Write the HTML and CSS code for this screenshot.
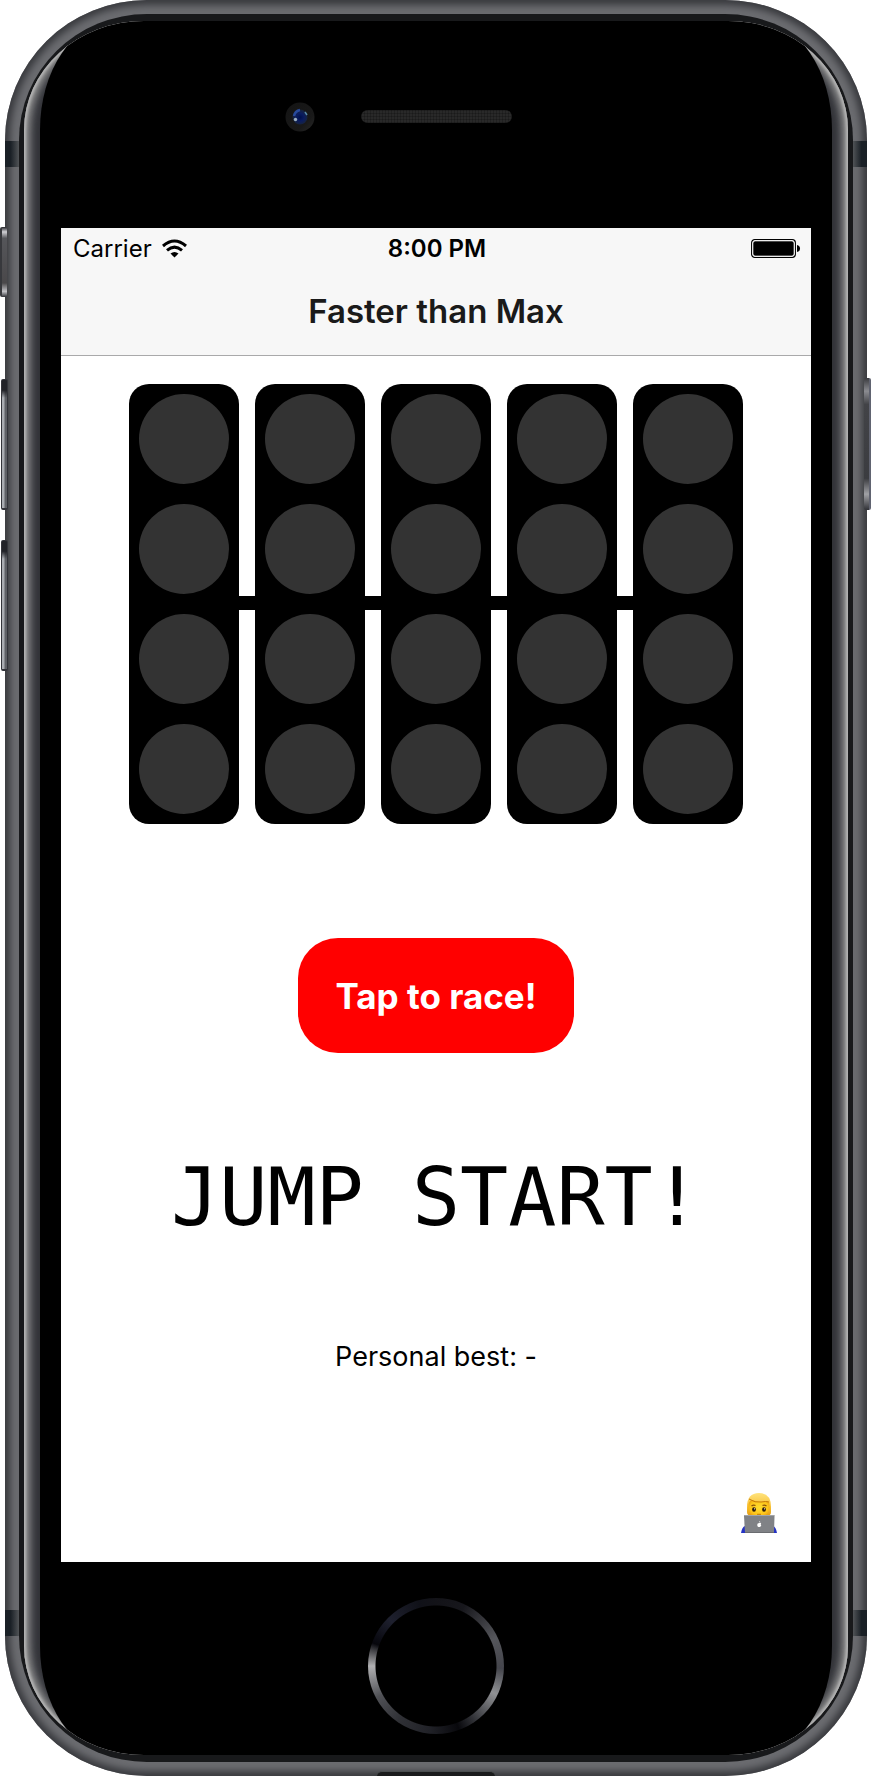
FILE: index.html
```html
<!DOCTYPE html>
<html lang="en">
<head>
<meta charset="utf-8">
<meta name="viewport" content="width=device-width, initial-scale=1">
<title>Faster than Max</title>
<link rel="stylesheet" href="styles.css">
</head>
<body>
<div class="phone">
  <span class="side-key side-key--mute"></span>
  <span class="side-key side-key--volume side-key--up"></span>
  <span class="side-key side-key--volume side-key--down"></span>
  <span class="side-key side-key--power"></span>
  <div class="chassis">
    <span class="band band--top band--left"></span>
    <span class="band band--top band--right"></span>
    <span class="band band--bottom band--left"></span>
    <span class="band band--bottom band--right"></span>
    <span class="port"></span>
    <div class="rim">
      <div class="glass">
        <div class="face">
          <div class="bezel-top">
            <svg class="camera" viewBox="0 0 30 30" aria-hidden="true">
              <defs>
                <radialGradient id="lens" cx=".52" cy=".52" r=".5">
                  <stop offset="0" stop-color="#00104a"/>
                  <stop offset=".5" stop-color="#0a1c60"/>
                  <stop offset="1" stop-color="#17233c"/>
                </radialGradient>
                <linearGradient id="barrel" x1="0" y1="0" x2="1" y2="1">
                  <stop offset="0" stop-color="#141414"/>
                  <stop offset=".7" stop-color="#191919"/>
                  <stop offset="1" stop-color="#292929"/>
                </linearGradient>
              </defs>
              <circle cx="15" cy="15" r="14.5" fill="url(#barrel)"/>
              <circle cx="15" cy="15" r="7.5" fill="url(#lens)"/>
              <path d="M9 14q1-5 6-6" stroke="#315bc0" stroke-width="2.5" fill="none" opacity=".7"/>
              <path d="M20 10l2 3" stroke="#69a5c8" stroke-width="1.5" opacity=".8"/>
              <circle cx="10.500" cy="17.500" r="1.700" fill="#a9bccb" opacity=".9"/>
            </svg>
            <span class="speaker"></span>
          </div>

          <div class="screen">
            <header class="top">
              <div class="status">
                <div class="status-left">
                  <span>Carrier</span>
                  <svg class="wifi" viewBox="0 0 25 19" role="img" aria-label="Wi-Fi">
                    <g fill="none" stroke="#000" stroke-width="3">
                      <path d="M1 7Q12.500-3 24 7"/>
                      <path d="M5 11.300Q12.500 4.900 20 11.300"/>
                    </g>
                    <path d="M8.500 14.600Q12.500 11.300 16.500 14.600L12.500 18.500Z"/>
                  </svg>
                </div>
                <time class="clock">8:00 PM</time>
                <svg class="battery" viewBox="0 0 50 19" role="img" aria-label="Battery full">
                  <rect x=".7" y=".7" width="43.600" height="17.600" rx="3" fill="#fff" stroke="#000" stroke-width="1.300"/>
                  <rect x="2" y="2" width="41" height="15" rx="2"/>
                  <rect x="1.800" y="1.800" width="41.400" height="15.400" rx="2.200" fill="none" stroke="#fff" stroke-width="1"/>
                  <path d="M46 6q3 .5 3 3.500t-3 3.500z"/>
                </svg>
              </div>
              <h1 class="title">Faster than Max</h1>
            </header>

            <main class="game">
              <div class="lights" role="img" aria-label="Start lights, all off">
                <div class="panel"><i></i><i></i><i></i><i></i></div>
                <div class="panel"><i></i><i></i><i></i><i></i></div>
                <div class="panel"><i></i><i></i><i></i><i></i></div>
                <div class="panel"><i></i><i></i><i></i><i></i></div>
                <div class="panel"><i></i><i></i><i></i><i></i></div>
              </div>
              <button class="race" type="button">Tap to race!</button>
              <p class="result">JUMP START!</p>
              <p class="best">Personal best: -</p>
              <button class="about" type="button" aria-label="About the developer">
                <svg viewBox="0 0 36 40" aria-hidden="true">
                  <defs>
                    <radialGradient id="skin" cx=".5" cy=".45" r=".6">
                      <stop offset="0" stop-color="#ffdc2e"/>
                      <stop offset=".7" stop-color="#fdc51b"/>
                      <stop offset="1" stop-color="#e89d10"/>
                    </radialGradient>
                    <linearGradient id="hair" x1="0" y1="0" x2="0" y2="1">
                      <stop offset="0" stop-color="#ffe37d"/>
                      <stop offset=".6" stop-color="#f8c033"/>
                      <stop offset="1" stop-color="#e39c14"/>
                    </linearGradient>
                  </defs>
                  <path d="M0 40q1-6 4-7h28q3 1 4 7z" fill="#2432c4"/>
                  <path d="M6 14Q6 0 18 0t12 14v5q0 3-3 4H9q-3-1-3-4z" fill="url(#hair)"/>
                  <path d="M7.500 13q0-5 3.500-6 8 3 16 1 1.500 2 1.500 7-1 9-10.500 9T7.500 17z" fill="url(#skin)"/>
                  <path d="M8 6q6 4 12 3 5-1 8 0" stroke="#c57b0b" stroke-width="1" fill="none"/>
                  <path d="M10.500 13q2-1.500 4-.5M21.500 12.500q2-1 4 .5" stroke="#8b5208" stroke-width="1.200" fill="none"/>
                  <ellipse cx="13" cy="16.500" rx="1.900" ry="2.200" fill="#2d1a08"/>
                  <ellipse cx="23" cy="16.500" rx="1.900" ry="2.200" fill="#2d1a08"/>
                  <circle cx="13.500" cy="15.800" r=".6" fill="#fff"/>
                  <circle cx="23.500" cy="15.800" r=".6" fill="#fff"/>
                  <path d="M16 21.300h4" stroke="#c07a0a" stroke-width="1"/>
                  <path d="M3 23q0-1 1-1h28.500q1 0 1 1L33 40H4z" fill="#808286"/>
                  <path d="M3.500 22.500H33.500" stroke="#a2a4a7"/>
                  <path d="M4 39.500h29" stroke="#6a6c70"/>
                  <path d="M18.200 30q1.700-.7 2 .3-1 1 .1 2-.8 2.200-2 1.600-1.500.6-2-1.400-.4-2.300 1.900-2.500zM18 29.500q0-1.300 1.200-1.600 0 1.300-1.200 1.600z" fill="#fff"/>
                </svg>
              </button>
            </main>
          </div>

          <div class="bezel-bottom"><span class="home"></span></div>
        </div>
      </div>
    </div>
  </div>
</div>
</body>
</html>
```
FILE: styles.css
```css
* {
  box-sizing: border-box;
}

body {
  margin: 0;
  background: #fff;
  color: #000;
  font-family: Inter, "Liberation Sans", sans-serif;
}

h1,
p {
  margin: 0;
  font-weight: 400;
}

button {
  border: 0;
  font: inherit;
}

/* Phone shell */
.phone {
  position: relative;
  padding: 0 4px 1px 5px;
}

.chassis {
  position: relative;
  overflow: hidden;
  padding: 14px;
  border-radius: 142px / 140px;
  background: #6b6c70;
  box-shadow: inset 0 0 7px 5px #393a3e;
}

.rim {
  padding: 7px 5px;
  border-radius: 128px / 126px;
  background: #18191b;
}

.glass {
  overflow: hidden;
  padding: 0 16px;
  border-radius: 120px / 109px;
  background: #303136;
  box-shadow: inset 0 0 3px 2px #b8b8b8, inset 0 0 6px 5px #8c8c8c, inset 0 0 8px 9px #56575b;
}

.face {
  padding: 0 21px;
  border-radius: 75px / 109px;
  background: #000;
}

.band {
  position: absolute;
  width: 14px;
  height: 26px;
}

.band--top {
  top: 141px;
}

.band--bottom {
  bottom: 140px;
}

.band--left {
  left: 0;
  background: linear-gradient(90deg, #1a2026 40%, #505356);
}

.band--right {
  right: 0;
  background: linear-gradient(270deg, #1a2026 40%, #505356);
}

.port {
  position: absolute;
  bottom: 0;
  left: 50%;
  width: 118px;
  height: 5px;
  margin-left: -59px;
  border-top: 1px solid #4b4f4f;
  border-radius: 8px 8px 0 0;
  background: #1a1b1c;
}

.side-key {
  position: absolute;
  z-index: 1;
  width: 7px;
  border-radius: 2px;
}

.side-key--mute {
  top: 227px;
  left: 0;
  height: 70px;
  border-left: 2px solid #37383c;
  background: linear-gradient(#222328, #d0d0d4 7%, #55565a 16%, #4a484a 80%, #c3c3c7 92%, #303136);
}

.side-key--volume {
  left: 1px;
  height: 131px;
  border: 1px solid #33343a;
  border-width: 1px 1px 2px;
  background: linear-gradient(#222328 8%, transparent 14%), linear-gradient(90deg, #aaadb2 2px, #5e6065 3px);
}

.side-key--up {
  top: 379px;
}

.side-key--down {
  top: 540px;
}

.side-key--power {
  top: 378px;
  right: 0;
  height: 132px;
  border-right: 2px solid #606370;
  background: linear-gradient(#3a3b3f, #8b8c91 10%, #424347 20%, #3b3c40 76%, #a0a1a5 88%, #303136);
}

.bezel-top {
  display: grid;
  grid-template-columns: 1fr auto 1fr;
  align-items: center;
  column-gap: 46px;
  height: 207px;
  padding-bottom: 16px;
}

.camera {
  justify-self: end;
  width: 30px;
  height: 30px;
}

.speaker {
  width: 151px;
  height: 13px;
  border-radius: 7px;
  background:
    repeating-linear-gradient(90deg, #0003 0 1px, #0000 1px 3px),
    repeating-linear-gradient(#0003 0 1px, #0000 1px 3px),
    #292929;
}

.bezel-bottom {
  display: grid;
  place-items: center;
  height: 193px;
  padding-top: 15px;
}

.home {
  width: 136px;
  height: 136px;
  border-radius: 50%;
  background:
    radial-gradient(circle, #000 60px, transparent 61px),
    conic-gradient(#131318, #17171c 25deg, #55565b 65deg, #44454c 92deg, #909194 115deg, #303136 145deg, #08080c 160deg, #202127 185deg, #303136 215deg, #505156 242deg, #b0b0b2 270deg, #404044 284deg, #06060c 290deg, #1e202e 315deg, #101118 345deg, #131318);
}

/* App */
.screen {
  background: #fff;
}

.top {
  border-bottom: 1px solid #a9a9aa;
  background: #f7f7f7;
}

.status {
  display: grid;
  grid-template-columns: 1fr auto 1fr;
  align-items: center;
  height: 40px;
  padding: 1px 10px 0 12px;
  font-size: 24px;
  line-height: 28px;
}

.status-left {
  display: flex;
  align-items: center;
  gap: 10px;
}

.wifi {
  width: 25px;
  height: 19px;
}

.clock {
  font-weight: 600;
}

.battery {
  justify-self: end;
  width: 50px;
  height: 19px;
}

.title {
  color: #1a1a1a;
  font-size: 33px;
  font-weight: 600;
  line-height: 87px;
  text-align: center;
}

.game {
  display: flex;
  flex-direction: column;
  align-items: center;
  padding: 28px 34px 29px;
}

.lights {
  position: relative;
  display: flex;
  gap: 16px;
}

.lights::before {
  content: "";
  position: absolute;
  top: 212px;
  right: 20px;
  left: 20px;
  height: 14px;
  background: #000;
}

.panel {
  position: relative;
  display: grid;
  gap: 20px;
  padding: 10px;
  border-radius: 20px;
  background: #000;
}

.panel i {
  width: 90px;
  height: 90px;
  border-radius: 50%;
  background: #333;
}

.race {
  margin-top: 114px;
  padding: 37px 37px 35px;
  border-radius: 40px;
  background: #f00;
  color: #fff;
  font-size: 35px;
  font-weight: 700;
  line-height: 43px;
}

.result {
  margin-top: 98px;
  font-family: "DejaVu Sans Mono", monospace;
  font-size: 80px;
  line-height: 94px;
}

.best {
  margin-top: 94px;
  font-size: 27px;
  line-height: 36px;
}

.about {
  align-self: flex-end;
  width: 36px;
  margin-top: 118px;
  padding: 0;
  background: none;
}

.about svg {
  display: block;
  width: 36px;
  height: 40px;
}
```
